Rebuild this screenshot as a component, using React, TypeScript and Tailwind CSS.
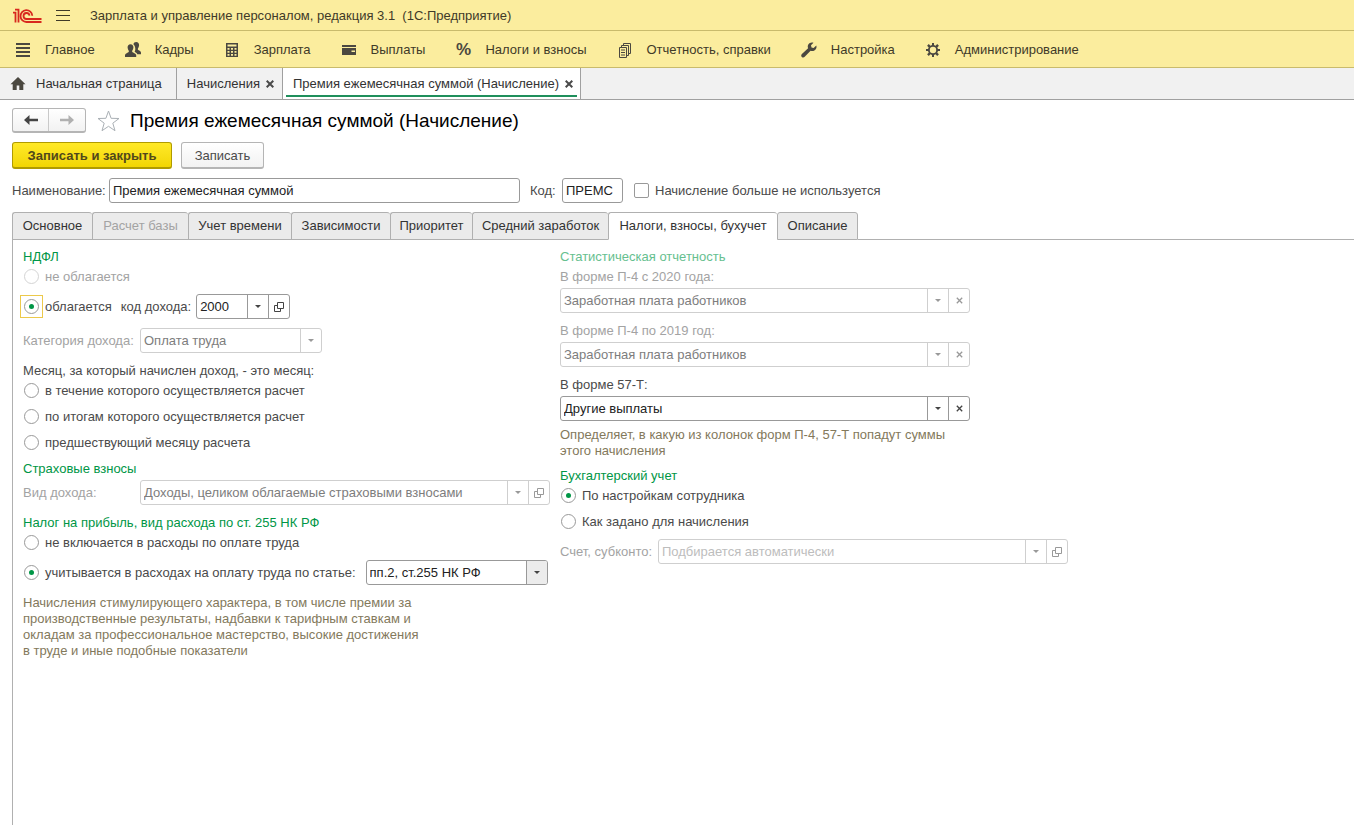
import React from "react";

function Logo() {
  return (
    <svg width="30" height="16" viewBox="0 0 30 16" fill="none" stroke="#d8281e" strokeWidth="1.8" role="img" aria-label="1C">
      <path d="M1 4.600h2.500v10" />
      <path d="M3 1.600h3.500v13" />
      <path d="M20.300 7.700A5.900 5.900 0 1 0 14.600 14H29.500" />
      <path d="M17.500 7.700A3 3 0 1 0 14.600 11H29.500" />
    </svg>
  );
}

function Icon({ name }: { name: string }) {
  if (name === "percent")
    return (
      <span aria-hidden="true" className="flex w-4 shrink-0 justify-center text-[17px] font-bold leading-4 text-[#4b4840]">
        %
      </span>
    );
  return (
    <svg width="16" height="16" viewBox="0 0 16 16" fill="#4b4840" className="shrink-0" aria-hidden="true">
      {name === "main" && <path d="M1 2h14M1 6h14M1 10h14M1 14h14" stroke="#4b4840" strokeWidth="2" />}
      {name === "people" && (
        <>
          <path d="M8.400 2.200C8.700.700 9.800 0 11.200 0c1.900 0 3 1.300 2.900 3.300-.1 1.600-.8 2.600-1.200 3.200v1.300c.9.800 2.900 1.100 3.100 2.600v1.800h-3.700c-.5-1.300-1.800-1.900-2.700-2.400.9-1.300 1.400-5-1.200-7.600z" />
          <path d="M5.500 2.300c1.900 0 3 1.300 2.900 3.200-.1 1.600-.8 2.500-1.200 3.200v1.200c.9.900 3.800 1.300 4 3.100V15H0v-2c.2-1.800 2.900-2.200 3.800-3.100V8.700c-.4-.7-1.100-1.600-1.200-3.200-.1-1.900 1-3.200 2.900-3.200z" />
        </>
      )}
      {name === "calc" && (
        <path fillRule="evenodd" d="M2 1h12v14H2zM3.500 2.500v2h9v-2zM3.500 6v1.700h2V6zm3.500 0v1.700h2V6zm3.500 0v1.700h2V6zM3.500 9v1.700h2V9zM7 9v1.700h2V9zm3.500 0v1.700h2V9zM3.500 12v1.700h2V12zM7 12v1.700h2V12zm3.500 0v1.700h2V12z" />
      )}
      {name === "card" && <path fillRule="evenodd" d="M1 3h14v2H1zM1 6h14v7H1zM10.500 8.500V10H14V8.500z" />}
      {name === "docs" && (
        <g fill="none" stroke="#4b4840" strokeWidth="1">
          <path d="M2.500 5.500h7v10h-7z" />
          <path d="M4.500 5V3.500h7v10H10M6.500 3V1.500h7v10H12M4 8h4M4 10.500h4M4 13h4" />
        </g>
      )}
      {name === "wrench" && (
        <path d="M15.300 3.500l-2.700 2.400-2.100-.5-.5-2.100L12.500.8c-2-.8-4.200-.1-5.200 1.700-.7 1.200-.7 2.500-.2 3.700L.9 12c-.9.900-.9 2.100-.1 2.900s2.100.8 2.900-.1l5.900-6.100c1.300.5 2.600.4 3.800-.3 1.800-1 2.600-3 1.900-4.900z" />
      )}
      {name === "gear" && (
        <path
          fillRule="evenodd"
          d="M7 1h2v2l1.600.7L12.200 2.100l1.700 1.700-1.600 1.600L13 7h2v2h-2l-.7 1.700 1.600 1.500-1.700 1.700-1.600-1.600L9 13v2H7v-2l-1.600-.7-1.600 1.600-1.700-1.700 1.600-1.500L3 9H1V7h2l.7-1.600-1.600-1.600 1.700-1.700 1.600 1.600L7 3zM8 4.800a3.200 3.200 0 1 0 0 6.400 3.200 3.200 0 0 0 0-6.400z"
        />
      )}
      {name === "home" && <path d="M8 1L.5 8.300h2.200V14h4V9.500h2.600V14h4V8.300h2.200z" />}
    </svg>
  );
}

const MENU = [
  { icon: "main", text: "Главное" },
  { icon: "people", text: "Кадры" },
  { icon: "calc", text: "Зарплата" },
  { icon: "card", text: "Выплаты" },
  { icon: "percent", text: "Налоги и взносы" },
  { icon: "docs", text: "Отчетность, справки" },
  { icon: "wrench", text: "Настройка" },
  { icon: "gear", text: "Администрирование" },
];

const TABS = [
  { text: "Основное", width: "w-20" },
  { text: "Расчет базы", width: "w-24", disabled: true },
  { text: "Учет времени", width: "w-[103px]" },
  { text: "Зависимости", width: "w-[99px]" },
  { text: "Приоритет", width: "w-[82px]" },
  { text: "Средний заработок", width: "w-[136px]" },
  { text: "Налоги, взносы, бухучет", width: "w-[169px]", active: true },
  { text: "Описание", width: "w-[81px]" },
];

function CloseIcon() {
  return (
    <svg width="8" height="8" viewBox="0 0 8 8" stroke="#4a4a4a" strokeWidth="2" aria-hidden="true">
      <path d="M.7.7l6.600 6.600M7.300.7L.7 7.300" />
    </svg>
  );
}

type GlyphKind = "down" | "open" | "clear";

function Glyph({ kind }: { kind: GlyphKind }) {
  if (kind === "down")
    return (
      <svg width="6" height="3" viewBox="0 0 6 3" fill="currentColor" aria-hidden="true">
        <path d="M0 0h6L3 3z" />
      </svg>
    );
  if (kind === "open")
    return (
      <svg width="10" height="10" viewBox="0 0 10 10" fill="none" stroke="currentColor" aria-hidden="true">
        <path d="M3.500.5h6v6h-6zM3 3.500H.5v6h6V7" />
      </svg>
    );
  return (
    <svg width="7" height="7" viewBox="0 0 7 7" stroke="currentColor" strokeWidth="1.300" aria-hidden="true">
      <path d="M.8.8l5.400 5.400M6.200.8L.8 6.200" />
    </svg>
  );
}

const GLYPH_LABEL = { down: "Выбрать из списка", open: "Открыть", clear: "Очистить" };

function Combo(props: {
  id: string;
  width: string;
  value?: string;
  placeholder?: string;
  label?: string;
  disabled?: boolean;
  shaded?: boolean;
  buttons: GlyphKind[];
}) {
  const line = props.disabled ? "border-[#cfcfcf]" : "border-[#999]";
  return (
    <div className={`flex h-[25px] shrink-0 overflow-hidden rounded-[3px] border bg-white ${line} ${props.width}`}>
      <input
        id={props.id}
        aria-label={props.label}
        disabled={props.disabled}
        defaultValue={props.value}
        placeholder={props.placeholder}
        className="w-0 min-w-0 flex-1 px-[3px] text-[#222] outline-none placeholder:text-[#bdbdbd] disabled:text-[#7d7d7d]"
      />
      {props.buttons.map((b) => (
        <button
          key={b}
          type="button"
          disabled={props.disabled}
          aria-label={GLYPH_LABEL[b]}
          className={`flex w-[21px] items-center justify-center border-l text-[#444] disabled:text-[#999] ${line} ${props.shaded ? "bg-[#ececec]" : ""}`}
        >
          <Glyph kind={b} />
        </button>
      ))}
    </div>
  );
}

function Radio(props: { name: string; text: string; checked?: boolean; disabled?: boolean; focused?: boolean }) {
  return (
    <label className={`-ml-[3px] flex h-[21px] items-center gap-[2px] ${props.disabled ? "text-[#a3a3a3]" : ""}`}>
      <span className={`flex size-[23px] shrink-0 items-center justify-center border ${props.focused ? "border-[#ecc94b]" : "border-transparent"}`}>
        <input
          type="radio"
          name={props.name}
          defaultChecked={props.checked}
          disabled={props.disabled}
          className="flex size-[15px] appearance-none items-center justify-center rounded-full border border-[#999] bg-white before:size-[5px] before:rounded-full checked:before:bg-[#009646] disabled:border-[#d4d4d4]"
        />
      </span>
      <span className="pt-px">{props.text}</span>
    </label>
  );
}

function Heading({ children, muted }: { children: React.ReactNode; muted?: boolean }) {
  return <h2 className={`h-5 leading-[22px] ${muted ? "text-[#66c08f]" : "text-[#009646]"}`}>{children}</h2>;
}

function LeftColumn() {
  return (
    <div className="w-[537px] shrink-0">
      <Heading>НДФЛ</Heading>
      <Radio name="ndfl" text="не облагается" disabled />
      <div className="mt-[7px] flex h-[25px] items-center">
        <Radio name="ndfl" text="облагается" checked focused />
        <label htmlFor="code" className="ml-[9px] mr-[5px]">код дохода:</label>
        <Combo id="code" width="w-[94px]" value="2000" buttons={["down", "open"]} />
      </div>
      <div className="mt-[9px] flex h-[25px] items-center">
        <label htmlFor="cat" className="w-[117px] text-[#a3a3a3]">Категория дохода:</label>
        <Combo id="cat" width="w-[182px]" value="Оплата труда" disabled buttons={["down"]} />
      </div>
      <p className="mt-[7px] h-5 leading-[22px]">Месяц, за который начислен доход, - это месяц:</p>
      <div className="flex flex-col gap-[5px]">
        <Radio name="month" text="в течение которого осуществляется расчет" />
        <Radio name="month" text="по итогам которого осуществляется расчет" />
        <Radio name="month" text="предшествующий месяцу расчета" />
        <Heading>Страховые взносы</Heading>
      </div>
      <div className="mt-[2px] flex h-[25px] items-center">
        <label htmlFor="kind" className="w-[117px] text-[#a3a3a3]">Вид дохода:</label>
        <Combo id="kind" width="w-[410px]" value="Доходы, целиком облагаемые страховыми взносами" disabled buttons={["down", "open"]} />
      </div>
      <div className="mt-[7px]">
        <Heading>Налог на прибыль, вид расхода по ст. 255 НК РФ</Heading>
        <Radio name="profit" text="не включается в расходы по оплате труда" />
      </div>
      <div className="mt-[7px] flex h-[25px] items-center gap-[10px]">
        <Radio name="profit" text="учитывается в расходах на оплату труда по статье:" checked />
        <Combo id="article" label="Статья расходов" width="w-[182px]" value="пп.2, ст.255 НК РФ" shaded buttons={["down"]} />
      </div>
      <p className="mt-[10px] w-[400px] leading-4 text-[#83795c]">
        Начисления стимулирующего характера, в том числе премии за производственные результаты, надбавки к тарифным ставкам и окладам за
        профессиональное мастерство, высокие достижения в труде и иные подобные показатели
      </p>
    </div>
  );
}

function StackedField(props: { id: string; label: string; value: string; disabled?: boolean }) {
  return (
    <div className="flex flex-col gap-[2px]">
      <label htmlFor={props.id} className={`h-5 leading-[22px] ${props.disabled ? "text-[#a3a3a3]" : ""}`}>
        {props.label}
      </label>
      <Combo id={props.id} width="w-[410px]" value={props.value} disabled={props.disabled} buttons={["down", "clear"]} />
    </div>
  );
}

function RightColumn() {
  return (
    <div className="w-[508px] shrink-0">
      <Heading muted>Статистическая отчетность</Heading>
      <div className="flex flex-col gap-[7px]">
        <StackedField id="p20" label="В форме П-4 с 2020 года:" value="Заработная плата работников" disabled />
        <StackedField id="p19" label="В форме П-4 по 2019 год:" value="Заработная плата работников" disabled />
        <StackedField id="f57" label="В форме 57-Т:" value="Другие выплаты" />
      </div>
      <p className="mb-[6px] mt-[6px] w-[400px] leading-4 text-[#83795c]">
        Определяет, в какую из колонок форм П-4, 57-Т попадут суммы этого начисления
      </p>
      <Heading>Бухгалтерский учет</Heading>
      <div className="flex flex-col gap-[5px]">
        <Radio name="acc" text="По настройкам сотрудника" checked />
        <Radio name="acc" text="Как задано для начисления" />
      </div>
      <div className="mt-[7px] flex h-[25px] items-center">
        <label htmlFor="account" className="w-[98px] text-[#a3a3a3]">Счет, субконто:</label>
        <Combo id="account" width="w-[410px]" placeholder="Подбирается автоматически" disabled buttons={["down", "open"]} />
      </div>
    </div>
  );
}

export default function App() {
  return (
    <div className="flex min-h-screen flex-col bg-white font-['Liberation_Sans',Arial,sans-serif] text-[13px] leading-4 text-[#4a4a4a]">
      <header className="bg-[#fbed9e] text-[#3f3a28]">
        <div className="flex h-[31px] items-center border-b border-[#c9bb6c] pl-3 pt-px">
          <Logo />
          <button type="button" aria-label="Меню" className="ml-[14px] mr-5">
            <svg width="14" height="12" viewBox="0 0 14 12" stroke="#3f3a28" aria-hidden="true">
              <path d="M0 .5h14M0 5.500h14M0 10.500h14" />
            </svg>
          </button>
          <span className="whitespace-pre pt-px">Зарплата и управление персоналом, редакция 3.1  (1С:Предприятие)</span>
        </div>
        <nav className="flex h-[37px] items-center gap-[30px] border-b border-[#c9bb6c] pl-[15px] pt-px">
          {MENU.map((m) => (
            <button key={m.text} type="button" className="flex items-center gap-[14px] whitespace-nowrap">
              <Icon name={m.icon} />
              <span className="pt-px">{m.text}</span>
            </button>
          ))}
        </nav>
      </header>

      <div className="flex h-8 border-b border-[#a0a0a0] bg-[#f1f1f1] text-[#333]">
        <button type="button" className="flex items-center gap-[10px] border-r border-[#a0a0a0] pl-[10px] pr-[14px]">
          <Icon name="home" />
          Начальная страница
        </button>
        <div className="flex items-center gap-[6px] border-r border-[#a0a0a0] pl-[10px] pr-2">
          Начисления
          <button type="button" aria-label="Закрыть"><CloseIcon /></button>
        </div>
        <div className="flex border-r border-[#a0a0a0] bg-white px-[3px] pb-[2px]">
          <div className="flex items-center gap-[6px] border-b-2 border-[#1f8f5c] pl-[7px] pr-1 pt-1">
            Премия ежемесячная суммой (Начисление)
            <button type="button" aria-label="Закрыть"><CloseIcon /></button>
          </div>
        </div>
      </div>

      <main className="flex flex-1 flex-col pl-3 pt-2">
        <div className="flex h-[25px] items-center">
          <div className="flex h-[25px] rounded-[3px] border border-b-2 border-[#b5b5b5] bg-gradient-to-b from-white to-[#f2f2f2]">
            <button type="button" aria-label="Назад" className="flex w-9 items-center justify-center border-r border-[#c9c9c9]">
              <svg width="14" height="10" viewBox="0 0 14 10" fill="#444" aria-hidden="true"><path d="M0 5l5.500-5v3.800H14v2.400H5.500V10z" /></svg>
            </button>
            <button type="button" aria-label="Вперед" className="flex w-9 items-center justify-center">
              <svg width="14" height="10" viewBox="0 0 14 10" fill="#b0b0b0" aria-hidden="true"><path d="M14 5L8.500 0v3.800H0v2.400h8.500V10z" /></svg>
            </button>
          </div>
          <button type="button" aria-label="В избранное" className="ml-[11px] mr-[10px]">
            <svg width="23" height="22" viewBox="0 0 23 22" fill="#fff" stroke="#aab0b5" aria-hidden="true">
              <path d="M11.500 1l2.600 7.300 7.900.2-6.200 4.700 2.200 7.500-6.500-4.400-6.500 4.400 2.200-7.500L1 8.500l7.900-.2z" />
            </svg>
          </button>
          <h1 className="text-[19px] leading-6 text-black">Премия ежемесячная суммой (Начисление)</h1>
        </div>

        <div className="mt-[9px] flex gap-[9px]">
          <button type="button" className="h-[27px] w-40 rounded-[3px] border border-b-2 border-[#b09b00] bg-gradient-to-b from-[#ffe926] to-[#f2d600] pt-px font-bold text-[#51481b]">
            Записать и закрыть
          </button>
          <button type="button" className="h-[27px] w-[83px] rounded-[3px] border border-b-2 border-[#b5b5b5] bg-gradient-to-b from-white to-[#f2f2f2] pt-px">
            Записать
          </button>
        </div>

        <div className="mt-[9px] flex h-[25px] items-center">
          <label htmlFor="title" className="w-[97px]">Наименование:</label>
          <Combo id="title" width="w-[411px]" value="Премия ежемесячная суммой" buttons={[]} />
          <label htmlFor="short" className="ml-[10px] w-8">Код:</label>
          <Combo id="short" width="w-[61px]" value="ПРЕМС" buttons={[]} />
          <label className="ml-[11px] flex items-center gap-[6px]">
            <input type="checkbox" className="size-[15px] appearance-none rounded-[2px] border border-[#999] bg-white checked:bg-[#009646]" />
            Начисление больше не используется
          </label>
        </div>

        <div role="tablist" className="mt-[9px] flex h-7 text-[#333]">
          {TABS.map((t, i) => (
            <button
              key={t.text}
              type="button"
              role="tab"
              aria-selected={!!t.active}
              disabled={t.disabled}
              className={`shrink-0 whitespace-nowrap rounded-t-[3px] border-b border-l border-t border-l-[#b0b0b0] border-t-[#b0b0b0] disabled:text-[#a3a3a3] ${t.width} ${t.active ? "border-b-white bg-white" : "border-b-[#b0b0b0] bg-[#ebebeb]"} ${i === TABS.length - 1 ? "border-r border-r-[#b0b0b0]" : ""}`}
            >
              {t.text}
            </button>
          ))}
          <div className="flex-1 border-b border-[#b0b0b0]" />
        </div>

        <section role="tabpanel" className="flex flex-1 border-l border-[#b0b0b0] pl-[10px] pt-[6px]">
          <LeftColumn />
          <RightColumn />
        </section>
      </main>
    </div>
  );
}
